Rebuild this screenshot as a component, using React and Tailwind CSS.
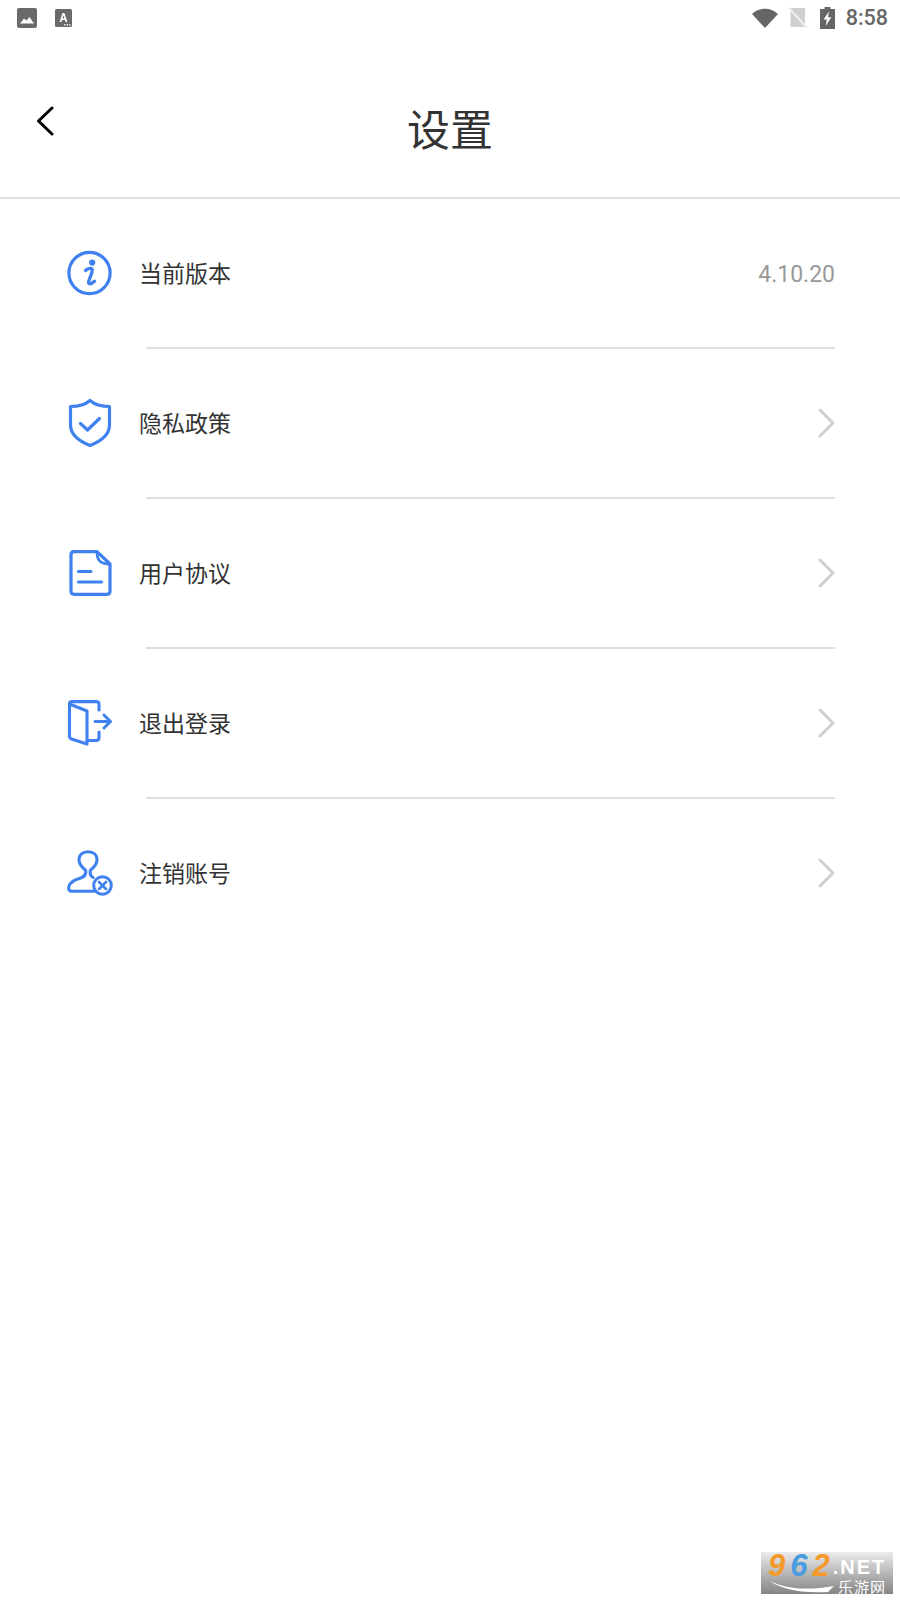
import React from "react";

const cjk = "font-['Noto_Sans_CJK_SC','Noto_Sans',sans-serif]";

function ImageNote() {
  return (
    <svg width="20" height="20" viewBox="0 0 20 20">
      <rect x="0" y="0" width="20" height="20" rx="2" fill="#6a6a6a" />
      <path d="M3 15.5 L7 10.5 L9.5 12.5 L12.5 9 L17 15.5 Z" fill="#fff" />
    </svg>
  );
}

function FontNote() {
  return (
    <svg width="17" height="19" viewBox="0 0 17 19">
      <rect x="0" y="0" width="17" height="18" rx="1.5" fill="#6a6a6a" />
      <path d="M4.6 13 L7.6 4 H9.4 L12.4 13 H10.6 L10 11 H7 L6.4 13 Z M7.5 9.4 H9.5 L8.5 6.2 Z" fill="#fff" />
      <rect x="9" y="15" width="1.6" height="1.6" fill="#ddd" />
      <rect x="11.5" y="15" width="1.6" height="1.6" fill="#ddd" />
      <rect x="14" y="15" width="1.6" height="1.6" fill="#ddd" />
    </svg>
  );
}

function StatusRight() {
  return (
    <div className="flex items-center">
      <svg width="26" height="20" viewBox="0 0 26 20" className="mr-[10px]">
        <path d="M0 6 C7.5 -1 18.5 -1 26 6 L13 20 Z" fill="#666" />
      </svg>
      <svg width="20" height="22" viewBox="0 0 20 22" className="mr-[12px]">
        <path d="M2.5 1 H17 V20 H2.5 Z" fill="#d0d0d0" />
        <path d="M0.5 0.5 L19 21" stroke="#f0f0f0" strokeWidth="2" />
      </svg>
      <svg width="15" height="22" viewBox="0 0 15 22" className="mr-[11px]">
        <path d="M4.5 0 H10.5 V2 H15 V22 H0 V2 H4.5 Z" fill="#666" />
        <path d="M9 4.5 L3.5 12.5 H6.8 L5.8 19 L11.3 10.3 H8 Z" fill="#fff" />
      </svg>
      <span className="font-['Roboto',sans-serif] text-[21.5px] font-medium leading-none text-[#666]">8:58</span>
    </div>
  );
}

function InfoIcon() {
  return (
    <svg width="46" height="46" viewBox="0 0 46 46" fill="none">
      <circle cx="22.5" cy="23" r="20.6" stroke="#4081f0" strokeWidth="3.2" />
      <circle cx="25.2" cy="12.6" r="3.1" fill="#4081f0" />
      <path d="M18.5 20.5 C20.5 18.8 23.5 18 25 19 C25.8 20 25 22 24 25 L21.8 31 C21.2 33 22 34 23.5 33.8 C25 33.4 26.2 32.6 27.5 31.2" stroke="#4081f0" strokeWidth="3.4" strokeLinecap="round" />
    </svg>
  );
}

function ShieldIcon() {
  return (
    <svg width="46" height="50" viewBox="0 0 46 50" fill="none">
      <path d="M23 2.5 C27 6 33 8.5 42.5 8.5 V27 C42.5 37 33 43.5 23 47.5 C13 43.5 3.5 37 3.5 27 V8.5 C13 8.5 19 6 23 2.5 Z" stroke="#4081f0" strokeWidth="3.2" strokeLinejoin="round" />
      <path d="M13.5 25.5 L20.5 32 L32.5 20.5" stroke="#4081f0" strokeWidth="3.2" strokeLinecap="round" strokeLinejoin="round" />
    </svg>
  );
}

function DocIcon() {
  return (
    <svg width="46" height="46" viewBox="0 0 46 46" fill="none">
      <path d="M7 1.7 H30 L43 14 V41 C43 43 42 44.3 40 44.3 H7 C5 44.3 4 43 4 41 V5 C4 3 5 1.7 7 1.7 Z" stroke="#4081f0" strokeWidth="3.2" strokeLinejoin="round" />
      <path d="M30 2 C30 10 33 14 43 14" stroke="#4081f0" strokeWidth="2.8" />
      <path d="M11.5 21.5 H24 M11.5 32 H34.5" stroke="#4081f0" strokeWidth="3.2" strokeLinecap="round" />
    </svg>
  );
}

function LogoutIcon() {
  return (
    <svg width="46" height="46" viewBox="0 0 46 46" fill="none">
      <path d="M2.5 4 L20 11 V44 L4.5 39 C3 38.5 2.5 37.5 2.5 36 Z" stroke="#4081f0" strokeWidth="3.1" strokeLinejoin="round" />
      <path d="M2.5 4 C2.5 2.5 3.5 1.6 5 1.6 H29 C31 1.6 32 2.6 32 4.5 V10 M20 40.5 H29 C31 40.5 32 39.5 32 37.5 V32" stroke="#4081f0" strokeWidth="3.1" strokeLinecap="round" />
      <path d="M28 21.5 H43.5 M37 15 L43.5 21.5 L37 28" stroke="#4081f0" strokeWidth="3" strokeLinecap="round" strokeLinejoin="round" />
    </svg>
  );
}

function UserOffIcon() {
  return (
    <svg width="46" height="46" viewBox="0 0 46 46" fill="none">
      <path d="M26 27.5 C23.5 26 22.5 24 23.5 20 C27.5 17 30 14 30 9.5 C30 5 26.5 1.7 21 1.7 C15.5 1.7 12 5 12 9.5 C12 14 14.5 17 18.5 20 C19.5 24 18 26 15 27.5 C9 29.5 3 31.5 1.8 37 C1.2 40 2.5 41.2 5 41.2 H27" stroke="#4081f0" strokeWidth="3.1" strokeLinecap="round" strokeLinejoin="round" />
      <circle cx="35.5" cy="35.5" r="8.8" stroke="#4081f0" strokeWidth="3" />
      <path d="M32 32 L39 39 M39 32 L32 39" stroke="#4081f0" strokeWidth="2.6" strokeLinecap="round" />
    </svg>
  );
}

function Chevron() {
  return (
    <svg width="17" height="30" viewBox="0 0 17 30" fill="none">
      <path d="M2 2 L15 15 L2 28" stroke="#cfcfcf" strokeWidth="3" strokeLinecap="round" strokeLinejoin="round" />
    </svg>
  );
}

function Row(props) {
  return (
    <div>
      <div className="flex h-[148px] items-center pl-[67px] pr-[65px]">
        <div className="flex w-[73px] flex-none items-center">{props.icon}</div>
        <div className={`-ml-[1px] flex-1 pb-[2px] text-[23px] leading-none text-[#333] ${cjk}`}>{props.label}</div>
        {props.value ? (
          <span className="pt-[2px] font-['Roboto',sans-serif] text-[23px] leading-none text-[#999]">{props.value}</span>
        ) : (
          <Chevron />
        )}
      </div>
      {props.line ? <div className="ml-[146px] mr-[65px] h-[2px] bg-[#dedede]" /> : null}
    </div>
  );
}

function Watermark() {
  return (
    <div className="absolute bottom-[6px] right-[7px] h-[42px] w-[132px] bg-gradient-to-b from-[#ececec] to-[#858585] pl-[7px]">
      <div className="flex h-[27px] items-center font-['Liberation_Sans',sans-serif] italic">
        <span className="text-[31px] font-bold leading-[27px] tracking-[5px] text-[#f39a2b]">9</span>
        <span className="text-[31px] font-bold leading-[27px] tracking-[5px] text-[#4a9be0]">6</span>
        <span className="text-[31px] font-bold leading-[27px] tracking-[3px] text-[#f39a2b]">2</span>
        <span className="pt-[3px] text-[20px] font-bold not-italic leading-[24px] tracking-[2px] text-white">.NET</span>
      </div>
      <div className="flex h-[15px] items-start">
        <svg width="70" height="14" viewBox="0 0 70 14" className="flex-none">
          <path d="M2 2 C20 11 42 11 66 7 L60 13 C38 14 16 12 2 2 Z" fill="#fff" />
        </svg>
        <span className={`text-[15px] leading-[15px] tracking-[1px] text-white ${cjk}`}>乐游网</span>
      </div>
    </div>
  );
}

class App extends React.Component {
  render() {
    return (
      <div className="relative h-[1600px] w-[900px] overflow-hidden bg-white">
        {/* Statusleiste */}
        <div className="flex h-[36px] items-center justify-between pl-[17px] pr-[12px]">
          <div className="flex items-center gap-[18px]">
            <ImageNote />
            <FontNote />
          </div>
          <StatusRight />
        </div>
        {/* Kopfzeile */}
        <div className="relative flex h-[163px] items-center justify-center border-b-2 border-[#dedede] pt-[22px]">
          <svg width="18" height="30" viewBox="0 0 18 30" fill="none" className="absolute left-[36px] top-[70px]">
            <path d="M16 2 L2.5 15 L16 28" stroke="#000" strokeWidth="3" strokeLinecap="round" strokeLinejoin="round" />
          </svg>
          <span className={`text-[43px] leading-none text-[#333] ${cjk}`}>设置</span>
        </div>
        <Row icon={<InfoIcon />} label="当前版本" value="4.10.20" line />
        <Row icon={<ShieldIcon />} label="隐私政策" line />
        <Row icon={<DocIcon />} label="用户协议" line />
        <Row icon={<LogoutIcon />} label="退出登录" line />
        <Row icon={<UserOffIcon />} label="注销账号" />
        <Watermark />
      </div>
    );
  }
}

export default App;
